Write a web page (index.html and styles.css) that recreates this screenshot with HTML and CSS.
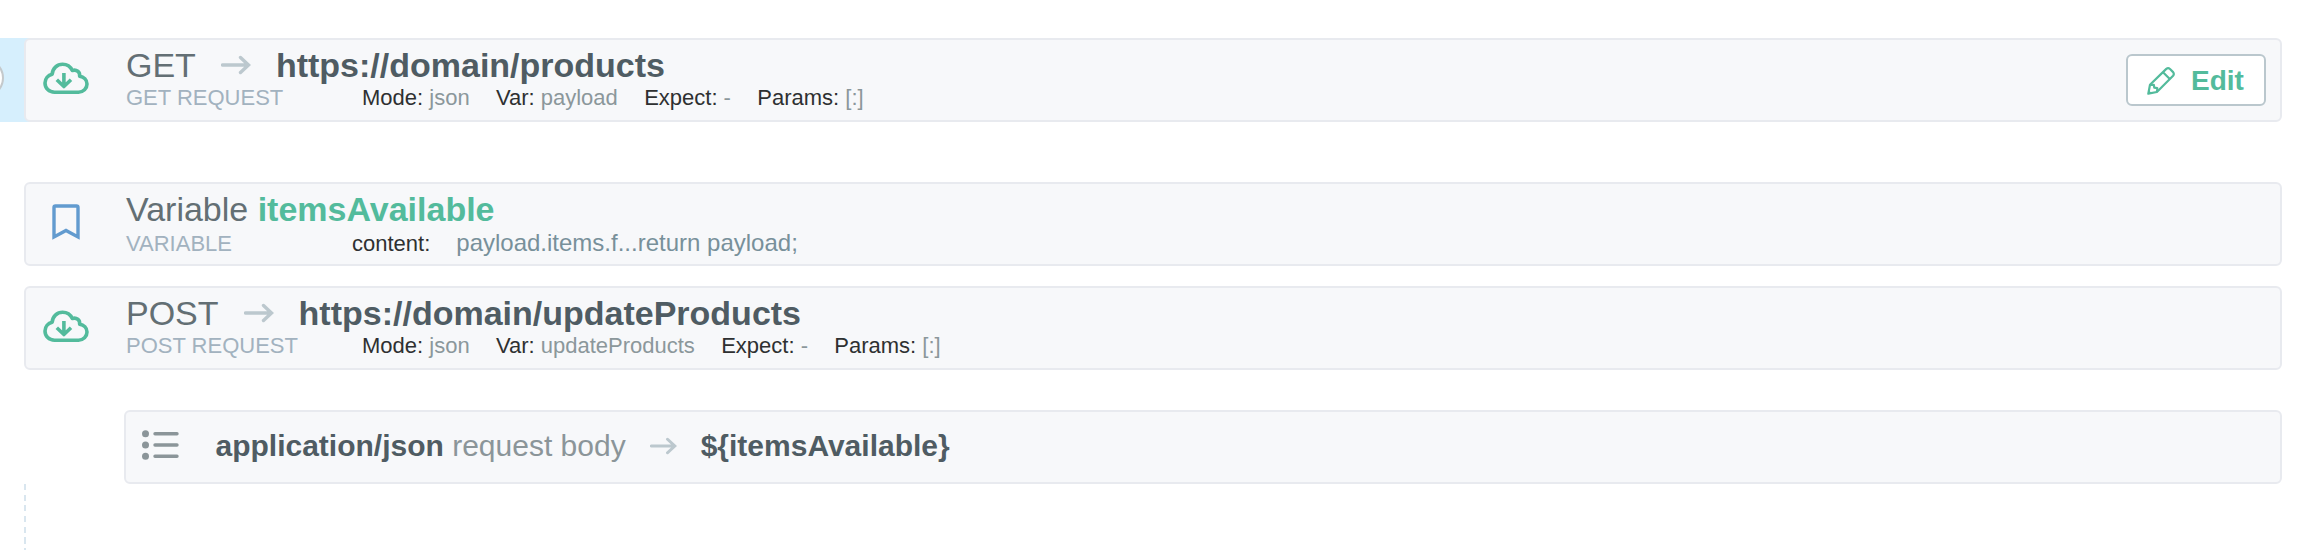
FILE: index.html
```html
<!DOCTYPE html>
<html lang="en">
<head>
<meta charset="utf-8">
<title>Flow steps</title>
<link rel="stylesheet" href="styles.css">
</head>
<body>
<svg class="defs" width="0" height="0">
  <symbol id="cloud" viewBox="0 0 46 34"><g fill="none" stroke="currentColor" stroke-width="3.6" stroke-linejoin="round"><path d="M11.5 31.2C6 31.2 2 27.2 2 22C2 17.500 5 14.200 9.200 13.200C9.500 7.500 14 3.300 19.600 3.300C24 3.300 27.500 5.700 29.300 9.500C33.500 8.200 37.200 11 36.600 15.100C40.800 15.800 44 19 44 23C44 27.600 40.300 31.200 35.500 31.200Z"/><path d="M20.900 12V26M13.800 18.800L20.900 25.500L28 18.800"/></g></symbol>
  <symbol id="arrow" viewBox="0 0 30 20"><path d="M1.500 10H27M19.500 2.500L27.500 10L19.500 17.500" fill="none" stroke="currentColor" stroke-width="3.400" stroke-linecap="round" stroke-linejoin="miter"/></symbol>
</svg>
<main class="flow">
  <section class="step selected">
    <span class="handle"></span>
    <article class="card">
      <svg class="icon cloud"><use href="#cloud"/></svg>
      <div class="body">
        <div class="title"><span>GET</span><svg class="arrow"><use href="#arrow"/></svg><b>https://domain/products</b></div>
        <div class="sub"><span class="kind">GET REQUEST</span><span class="pair">Mode: <i>json</i></span><span class="pair">Var: <i>payload</i></span><span class="pair">Expect: <i>-</i></span><span class="pair">Params: <i>[:]</i></span></div>
      </div>
      <button class="edit"><svg width="28" height="28" viewBox="0 0 28 28" fill="none" stroke="currentColor" stroke-width="2.200" stroke-linejoin="round"><path d="M1.300 26.700L3 17.800L19.300 1.900Q21.200 .500 23 2L26.100 5.100Q27.500 7 26.100 8.800L9.900 25Z"/><path d="M16 5.200L22.800 12M3 17.800L6.800 17.800L7.300 20.700L10.300 21.200L9.900 25"/><path d="M1 27L1.600 23L5 26.400Z" fill="currentColor" stroke="none"/></svg>Edit</button>
    </article>
  </section>
  <section class="step variable">
    <article class="card">
      <svg class="icon mark" viewBox="0 0 28 36"><path d="M2 33V3.500Q2 2 3.500 2H24.500Q26 2 26 3.500V33L14 26.500Z" fill="none" stroke="currentColor" stroke-width="3.400"/></svg>
      <div class="body">
        <div class="title"><span>Variable <b class="name">itemsAvailable</b></span></div>
        <div class="sub"><span class="kind">VARIABLE</span><span class="pair">content:</span><span class="code">payload.items.f...return payload;</span></div>
      </div>
    </article>
  </section>
  <section class="step post">
    <article class="card">
      <svg class="icon cloud"><use href="#cloud"/></svg>
      <div class="body">
        <div class="title"><span>POST</span><svg class="arrow"><use href="#arrow"/></svg><b>https://domain/updateProducts</b></div>
        <div class="sub"><span class="kind">POST REQUEST</span><span class="pair">Mode: <i>json</i></span><span class="pair">Var: <i>updateProducts</i></span><span class="pair">Expect: <i>-</i></span><span class="pair">Params: <i>[:]</i></span></div>
      </div>
    </article>
  </section>
  <section class="step nested">
    <article class="card small">
      <svg class="list" viewBox="0 0 37 30"><g fill="currentColor"><circle cx="3.500" cy="3.800" r="3.500"/><circle cx="3.500" cy="15" r="3.500"/><circle cx="3.500" cy="26.200" r="3.500"/></g><path d="M13 3.800H35M13 15H35M13 26.200H35" stroke="currentColor" stroke-width="3.400" stroke-linecap="round"/></svg>
      <div class="payload"><span><b>application/json</b> request body</span><svg class="arrow"><use href="#arrow"/></svg><b>${itemsAvailable}</b></div>
    </article>
  </section>
  <div class="rail"></div>
</main>
</body>
</html>
```

FILE: styles.css
```css
* { box-sizing: border-box; }
body {
  margin: 0;
  height: 550px;
  overflow: hidden;
  background: #fff;
  font-family: "Liberation Sans", Arial, sans-serif;
}
.defs { position: absolute; }
.flow {
  display: flex;
  flex-direction: column;
  height: 550px;
  padding: 38px 36px 0 0;
}
.step { padding-left: 24px; flex: none; }
.selected {
  position: relative;
  overflow: hidden;
  background: linear-gradient(to right, #d6effd 32px, transparent 32px);
}
.handle {
  position: absolute;
  left: -36px;
  top: 20px;
  width: 40px;
  height: 40px;
  border: 2px solid #c4c9cc;
  border-radius: 50%;
  background: #fff;
}
.variable { margin-top: 60px; }
.post { margin-top: 20px; }
.nested { margin-top: 40px; padding-left: 124px; }
.card {
  display: flex;
  align-items: flex-start;
  height: 84px;
  border: 2px solid #e8eaef;
  border-radius: 6px;
  background: #f7f8fa;
}
.icon { flex: none; }
.cloud { width: 46px; height: 34px; margin: 21px 37.500px 0 16.500px; color: #53bb9c; }
.mark { width: 28px; height: 36px; margin: 20px 46px 0 26px; color: #629bcf; }
.body { flex: 1; padding-top: 6px; white-space: nowrap; }
.title {
  display: flex;
  align-items: center;
  height: 38px;
  font-size: 34px;
  line-height: 38px;
  color: #636f74;
}
.title b { color: #4f5c63; }
.title .name { color: #53bb9c; }
.arrow { flex: none; width: 30px; height: 20px; margin: 0 25px; color: #bcc8ce; }
.sub { display: flex; align-items: baseline; font-size: 22px; line-height: 28px; }
.kind { width: 236px; color: #a2b2bf; }
.variable .kind { width: 226px; }
.pair { margin-right: 26.300px; color: #2e3031; }
.variable .pair { margin-right: 26px; }
.pair i { font-style: normal; color: #8b979b; }
.code { font-size: 24px; line-height: 30px; color: #78909a; }
.edit {
  display: flex;
  align-items: center;
  gap: 16px;
  width: 140px;
  height: 52px;
  margin: 14px 14px 0 0;
  padding: 2px 0 0 19px;
  border: 2px solid #bac7cd;
  border-radius: 6px;
  background: #fff;
  color: #53bb9c;
  font: bold 28px "Liberation Sans", Arial, sans-serif;
}
.edit svg { margin-top: -1px; }
.small { height: 74px; }
.list { flex: none; width: 37px; height: 30px; margin: 18px 36.500px 0 16px; color: #8b9599; }
.payload {
  display: flex;
  align-items: center;
  margin-top: 16px;
  font-size: 30px;
  line-height: 36px;
  white-space: nowrap;
  color: #8b9599;
}
.payload b { color: #4f5c63; }
.payload .arrow { width: 27px; height: 18px; margin: 0 24px; }
.rail {
  flex: 1;
  width: 2px;
  margin-left: 24px;
  background: repeating-linear-gradient(#d9e6ef 0 6px, transparent 6px 10.700px);
}
```
